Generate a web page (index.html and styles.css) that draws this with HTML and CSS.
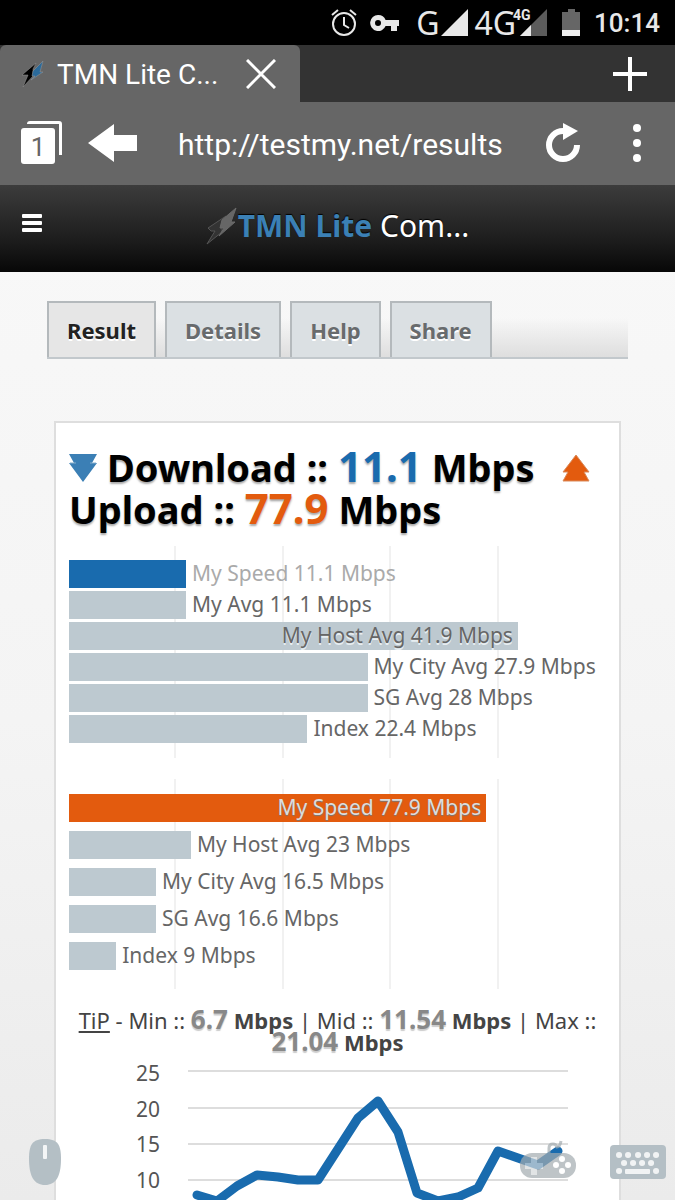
FILE: index.html
```
<!DOCTYPE html>
<html lang="en">
<head>
    <meta charset="UTF-8">
    <meta name="viewport" content="width=device-width, initial-scale=1.0">
    <title>TMN Lite Combined Test Results</title>
    <link rel="stylesheet" href="styles.css">
</head>
<body>
    <div class="status-bar">
        <svg width="28" height="28" viewBox="0 0 28 28" fill="none" stroke="#e8e8e8" stroke-width="2">
            <circle cx="14" cy="15" r="11"/>
            <path d="M14 8v8l5 3M2 6l6-5M26 6l-6-5"/>
        </svg>
        <svg class="key" width="30" height="18" viewBox="0 0 30 18" fill="#e8e8e8">
            <path fill-rule="evenodd" d="M8 1a8 8 0 0 1 7.6 5H29v6h-2v5h-6v-5h-5.400A8 8 0 1 1 8 1zm0 5a3 3 0 1 0 0 6 3 3 0 0 0 0-6z"/>
        </svg>
        <span class="network">G</span>
        <svg width="27" height="27" viewBox="0 0 27 27"><path fill="#e8e8e8" d="M27 0v27H0z"/></svg>
        <span class="network network-4g">4G</span>
        <span class="signal">
            <svg width="27" height="27" viewBox="0 0 27 27"><path fill="#5c5c5c" d="M27 0v27H0z"/><path fill="#e8e8e8" d="M11 16v11H0z"/></svg>
            <small>4G</small>
        </span>
        <svg class="battery" width="18" height="27" viewBox="0 0 18 27"><path fill="#666" d="M6 0h7v3h5v18H0V3h6z"/><path fill="#eee" d="M0 21h18v6H0z"/></svg>
        <span class="clock">10:14</span>
    </div>

    <div class="tab-strip">
        <div class="browser-tab">
            <svg width="24" height="28" viewBox="0 0 24 28">
                <path fill="#000" stroke="#999" stroke-width=".5" d="M15 3 1 15h6L2 27l10-11V9z"/>
                <path fill="#2b6a9a" stroke="#999" stroke-width=".5" d="M22 1 12 11l-1 5h3l-4 4 12-8h-3z"/>
            </svg>
            <span class="tab-title">TMN Lite C...</span>
            <button type="button" aria-label="Close tab">
                <svg width="30" height="30" viewBox="0 0 30 30" stroke="#fff" stroke-width="3"><path d="M1 1l28 28M29 1 1 29"/></svg>
            </button>
        </div>
        <button type="button" class="new-tab" aria-label="New tab">
            <svg width="34" height="34" viewBox="0 0 34 34" stroke="#fff" stroke-width="4"><path d="M17 0v34M0 17h34"/></svg>
        </button>
    </div>

    <div class="toolbar">
        <button type="button" class="tab-count" aria-label="Open tabs">
            <svg width="42" height="43" viewBox="0 0 42 43" fill="#fff">
                <path d="M9 0h29q3 0 3 3v31h-3V3H6q0-3 3-3z"/>
                <rect y="7" width="34" height="36" rx="3"/>
            </svg>
            <span>1</span>
        </button>
        <button type="button" class="back" aria-label="Back">
            <svg width="49" height="38" viewBox="0 0 49 38" fill="#fff"><path d="M0 19 26 0v11h23v16H26v11z"/></svg>
        </button>
        <input type="text" class="address" aria-label="Address" value="http://testmy.net/results">
        <button type="button" class="reload" aria-label="Reload">
            <svg width="34" height="40" viewBox="0 0 34 40"><path fill="none" stroke="#fff" stroke-width="6" d="M20 8h-3A14 14 0 1 0 31 22"/><path fill="#fff" d="M17 0l15 8-15 9z"/></svg>
        </button>
        <button type="button" class="more" aria-label="More">
            <svg width="10" height="40" viewBox="0 0 10 40" fill="#fff"><circle cx="5" cy="5" r="4"/><circle cx="5" cy="20" r="4"/><circle cx="5" cy="35" r="4"/></svg>
        </button>
    </div>

    <header>
        <button type="button" class="menu" aria-label="Menu">
            <svg width="20" height="18" viewBox="0 0 20 18" fill="#fff"><rect width="20" height="4" rx="1"/><rect y="7" width="20" height="4" rx="1"/><rect y="14" width="20" height="4" rx="1"/></svg>
        </button>
        <h1>
            <svg width="32" height="38" viewBox="0 0 32 38">
                <path fill="#333" stroke="#555" d="M20 9 2 21l3 3h4L1 37l15-12v-8z"/>
                <path fill="#666" stroke="#6a6a6a" d="M30 1 16 13l-2 8h4l-5 8 16-14h-4z"/>
            </svg>
            <span><b>TMN Lite</b> Com...</span>
        </h1>
    </header>

    <main>
        <nav>
            <a href="#result" class="active">Result</a>
            <a href="#details">Details</a>
            <a href="#help">Help</a>
            <a href="#share">Share</a>
        </nav>

        <section class="card" id="result">
            <h2>
                <svg width="28" height="28" viewBox="0 0 28 28"><path fill="#3b7fb5" d="M0 0h28l-5 9h5L14 28 0 9h5z"/><path fill="none" stroke="#86aecb" d="M1 9h6M21 9h6"/></svg>
                Download :: <span class="down">11.1</span> Mbps
                <svg class="up-icon" width="28" height="28" viewBox="0 0 28 28"><path fill="#e35b0e" stroke="#d98a5a" d="M14 1l13 17h-5l5 9H1l5-9H1z"/></svg>
                Upload :: <span class="up">77.9</span> Mbps
            </h2>

            <div class="bars download">
                <div class="row mine"><div class="bar" style="width: 21.8%"></div><span>My Speed 11.1 Mbps</span></div>
                <div class="row"><div class="bar" style="width: 21.8%"></div><span>My Avg 11.1 Mbps</span></div>
                <div class="row"><div class="bar" style="width: 83.6%">My Host Avg 41.9 Mbps</div></div>
                <div class="row"><div class="bar" style="width: 55.6%"></div><span>My City Avg 27.9 Mbps</span></div>
                <div class="row"><div class="bar" style="width: 55.6%"></div><span>SG Avg 28 Mbps</span></div>
                <div class="row"><div class="bar" style="width: 44.4%"></div><span>Index 22.4 Mbps</span></div>
            </div>

            <div class="bars upload">
                <div class="row mine"><div class="bar" style="width: 77.7%">My Speed 77.9 Mbps</div></div>
                <div class="row"><div class="bar" style="width: 22.7%"></div><span>My Host Avg 23 Mbps</span></div>
                <div class="row"><div class="bar" style="width: 16.2%"></div><span>My City Avg 16.5 Mbps</span></div>
                <div class="row"><div class="bar" style="width: 16.2%"></div><span>SG Avg 16.6 Mbps</span></div>
                <div class="row"><div class="bar" style="width: 8.8%"></div><span>Index 9 Mbps</span></div>
            </div>

            <p class="summary"><a href="#tip">TiP</a> - Min :: <b><i>6.7</i> Mbps</b> | Mid :: <b><i>11.54</i> Mbps</b> | Max :: <b><i>21.04</i> Mbps</b></p>

            <svg class="line-chart" viewBox="0 0 537 148">
                <path class="grid" d="M119 18h380M119 55h380M119 91h380M119 127h380"/>
                <g class="axis">
                    <text x="91" y="28">25</text>
                    <text x="91" y="64">20</text>
                    <text x="91" y="99">15</text>
                    <text x="91" y="135">10</text>
                </g>
                <polyline class="line" points="128,142 148,148 168,133 188,122 209,124 229,127 249,127 269,96 289,65 309,48 329,79 348,140 369,148 389,144 409,135 429,98 449,105 469,112 489,98"/>
            </svg>
        </section>
    </main>

    <div class="remote">
        <button type="button" aria-label="Mouse">
            <svg width="32" height="46" viewBox="0 0 32 46"><path fill="#b4bfc5" d="M16 0c13 0 16 6 16 20 0 17-5 26-16 26S0 37 0 20C0 6 3 0 16 0z"/><rect x="14" y="6" width="4" height="14" rx="1" fill="#f3f5f6"/></svg>
        </button>
        <button type="button" class="gamepad" aria-label="Gamepad">
            <svg width="56" height="38" viewBox="0 0 56 38">
                <path fill="none" stroke="#a3abb0" stroke-width="3" d="M29 14V8q0-4 4-4 3 0 4 3 3 0 4-6"/>
                <rect y="13" width="56" height="25" rx="12" fill="#a3abb0"/>
                <path fill="#d4d9db" d="M11 17h6v6h6v6h-6v6h-6v-6H5v-6h6z"/>
                <g fill="#fff"><circle cx="42" cy="19" r="3"/><circle cx="36" cy="25" r="3"/><circle cx="48" cy="25" r="3"/><circle cx="42" cy="31" r="3"/></g>
            </svg>
        </button>
        <button type="button" aria-label="Keyboard">
            <svg width="56" height="34" viewBox="0 0 56 34">
                <rect width="56" height="34" rx="4" fill="#b4bfc5"/>
                <path fill="none" stroke="#f1f3f4" stroke-width="6" stroke-linecap="round" d="M9 10h.1M18 10h.1M28 10h.1M37 10h.1M46 10h.1M14 18h.1M23 18h.1M32 18h.1M41 18h.1M9 26h.1M46 26h.1"/>
                <rect x="15" y="24" width="25" height="5" rx="1" fill="#f1f3f4"/>
            </svg>
        </button>
    </div>
</body>
</html>
```
FILE: styles.css
```
:root {
    --blue: #196bae;
    --orange: #e35b0e;
    --bar: #bdc9d0;
    --text: #666;
}

* {
    box-sizing: border-box;
}

body {
    display: flex;
    flex-direction: column;
    height: 100vh;
    margin: 0;
    overflow: hidden;
    background: linear-gradient(#fafafa, #f4f4f4 60%, #ebebeb);
    color: var(--text);
    font-family: "Noto Sans", sans-serif;
    font-size: 21px;
}

svg {
    display: block;
    flex: none;
}

button {
    padding: 0;
    border: none;
    background: none;
    cursor: pointer;
}

/* phone status bar */
.status-bar {
    display: flex;
    flex: none;
    align-items: center;
    justify-content: flex-end;
    height: 45px;
    padding-right: 15px;
    background: #000;
    color: #e8e8e8;
    font-family: Roboto, sans-serif;
}

.key {
    margin: 0 16px 0 12px;
}

.network {
    margin-right: 2px;
    font-family: "Noto Sans", sans-serif;
    font-size: 32px;
}

.network-4g {
    margin: 0 0 0 6px;
}

.signal {
    position: relative;
    margin-left: 4px;
}

.signal small {
    position: absolute;
    top: -2px;
    left: -7px;
    font-size: 14px;
    font-weight: bold;
    line-height: 16px;
}

.battery {
    margin: 0 14px 0 15px;
}

.clock {
    font-size: 26px;
    font-weight: 500;
}

/* browser chrome */
.tab-strip {
    display: flex;
    flex: none;
    align-items: stretch;
    justify-content: space-between;
    height: 57px;
    padding-right: 28px;
    background: #333;
}

.browser-tab {
    display: flex;
    align-items: center;
    width: 300px;
    padding: 0 24px 0 21px;
    border-radius: 6px 6px 0 0;
    background: #666;
    color: #fff;
    font-family: Roboto, sans-serif;
}

.tab-title {
    flex: 1;
    margin-left: 12px;
    padding-top: 2px;
    font-size: 28px;
}

.toolbar {
    display: flex;
    flex: none;
    align-items: center;
    height: 83px;
    padding: 0 33px 2px 21px;
    background: #666;
}

.tab-count {
    position: relative;
}

.tab-count span {
    position: absolute;
    top: 10px;
    left: 0;
    width: 34px;
    color: #666;
    font-family: Roboto, sans-serif;
    font-size: 26px;
    line-height: 32px;
}

.back {
    margin-left: 25px;
}

.address {
    flex: 1;
    min-width: 0;
    margin-left: 41px;
    padding: 3px 0 0;
    border: none;
    background: none;
    color: #fff;
    font-family: Roboto, sans-serif;
    font-size: 30px;
}

.more {
    margin-left: 52px;
}

/* site header */
header {
    position: relative;
    display: flex;
    flex: none;
    align-items: center;
    justify-content: center;
    height: 87px;
    padding-bottom: 6px;
    background: linear-gradient(#3c3c3c, #1c1c1c 65%, #070707);
}

.menu {
    position: absolute;
    top: 29px;
    left: 22px;
}

h1 {
    display: flex;
    align-items: center;
    margin: 0;
    color: #fff;
    font-size: 30px;
    font-weight: normal;
    line-height: 40px;
    text-shadow: 0 -1px 1px #000;
}

h1 b {
    color: #3b80b5;
}

/* page */
main {
    flex: 1;
    min-height: 0;
    padding: 29px 54px 0;
}

nav {
    display: flex;
    gap: 9px;
    height: 58px;
    margin: 0 -7px 62px;
    border-bottom: 2px solid #c2c8cc;
    background: linear-gradient(transparent 30%, #dedede);
}

nav a {
    padding: 0 18px;
    border: 2px solid #b4b9bc;
    border-bottom: none;
    background: #dbe0e3;
    color: #686b6d;
    font-size: 22px;
    font-weight: bold;
    line-height: 54px;
    text-decoration: none;
    text-shadow: 0 2px 0 #fff;
}

nav .active {
    background: #e6e6e6;
    color: #222;
}

.card {
    padding: 23px 13px 0;
    border: 2px solid #dedede;
    background: #fff;
}

h2 {
    margin: 0 0 16px;
    color: #000;
    font-size: 38px;
    line-height: 41px;
    text-shadow: 0 2px 2px #aaa;
}

h2 svg {
    display: inline-block;
    margin-top: -8px;
    vertical-align: middle;
}

h2 span {
    font-size: 42px;
    line-height: 40px;
}

h2 .up-icon {
    margin-left: 18px;
}

.down {
    color: var(--blue);
}

.up {
    color: var(--orange);
}

.bars {
    display: flex;
    flex-direction: column;
    gap: 3px;
    margin-bottom: 21px;
    padding: 14px 0 15px;
    background: linear-gradient(to right,
        #fff calc(20% - 2px), #f1f1f1 calc(20% - 2px) 20%,
        #fff 20% calc(40% - 2px), #f1f1f1 calc(40% - 2px) 40%,
        #fff 40% calc(60% - 2px), #f1f1f1 calc(60% - 2px) 60%,
        #fff 60% calc(80% - 2px), #f1f1f1 calc(80% - 2px) 80%,
        #fff 80%);
}

.bars.upload {
    gap: 9px;
    margin-bottom: 20px;
    padding: 15px 0 19px;
}

.row {
    display: flex;
    gap: 6px;
    line-height: 26px;
    white-space: nowrap;
}

.bar {
    flex: none;
    height: 28px;
    padding-right: 5px;
    background: var(--bar);
    text-align: right;
    text-shadow: 0 2px 0 #e8eef1;
}

.download .mine {
    color: #aaa;
}

.download .mine .bar {
    background: var(--blue);
}

.upload .mine .bar {
    background: var(--orange);
    color: #ddd;
    text-shadow: 0 1px 1px #777;
}

.summary {
    height: 44px;
    margin: 0;
    color: #444;
    font-size: 22px;
    line-height: 22px;
    text-align: center;
}

.summary a {
    color: inherit;
}

.summary i {
    color: #888;
    font-size: 26px;
    font-style: normal;
    line-height: 16px;
    text-shadow: 0 2px 1px #ccc;
}

.line-chart {
    width: 100%;
}

.grid {
    stroke: #ddd;
    stroke-width: 2;
}

.axis text {
    fill: #555;
    font-size: 21px;
    text-anchor: end;
}

.line {
    fill: none;
    stroke: var(--blue);
    stroke-width: 9;
    stroke-linecap: round;
    stroke-linejoin: round;
}

/* remote control buttons float over the page */
.remote {
    position: fixed;
    right: 9px;
    bottom: 15px;
    left: 29px;
    display: flex;
    align-items: center;
}

.gamepad {
    margin: 0 34px 6px auto;
    opacity: 0.7;
}
```
